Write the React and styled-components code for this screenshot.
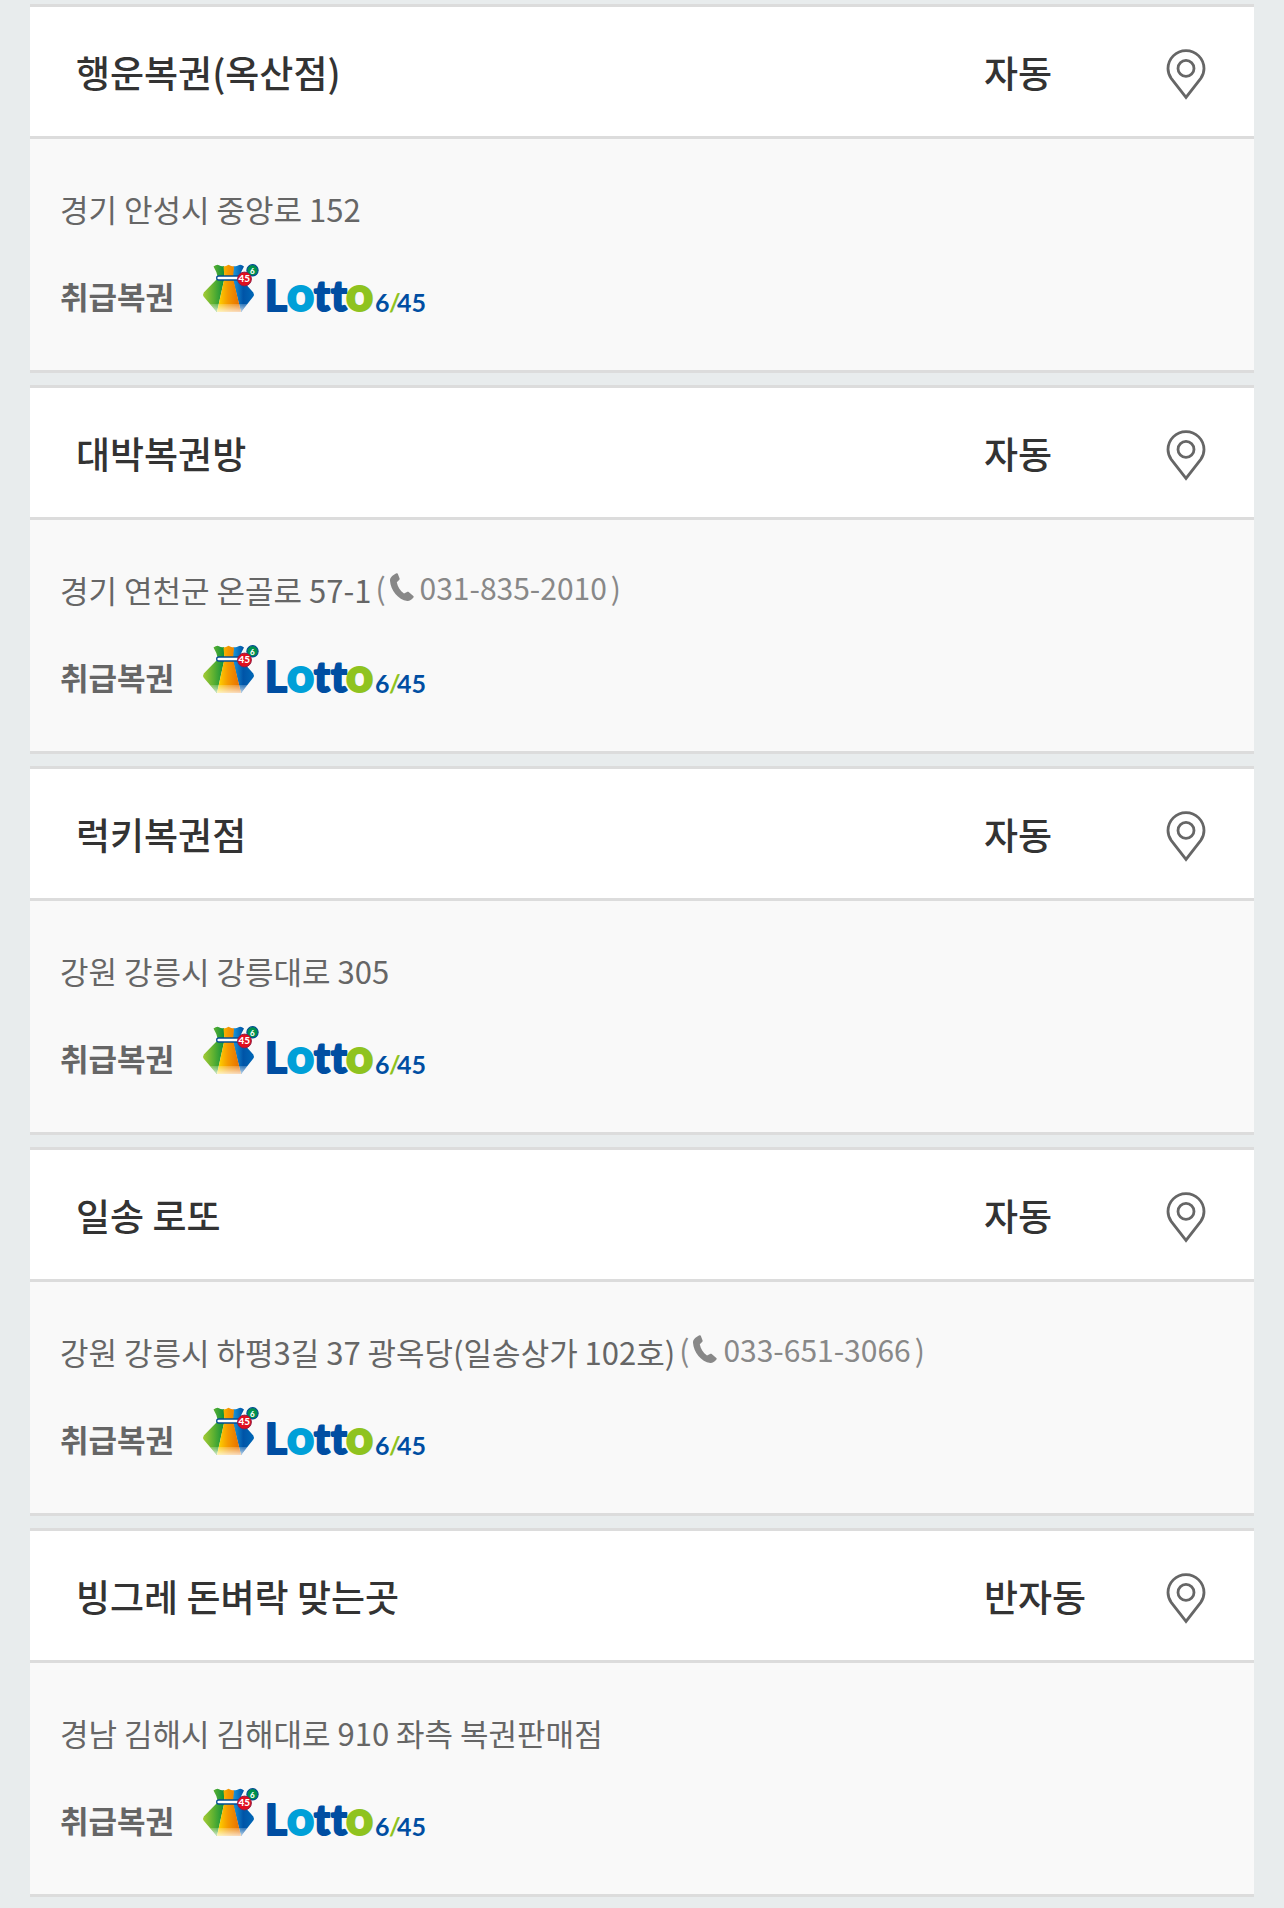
import React from "react";
import styled, { createGlobalStyle } from "styled-components";

const GlobalStyle = createGlobalStyle`
  * {
    box-sizing: border-box;
  }

  body {
    margin: 0;
    background: #e8eced;
    font-family: "Noto Sans CJK KR", "Noto Sans", sans-serif;
    color: #333;
  }
`;

const StoreList = styled.ul`
  list-style: none;
  margin: 0;
  padding: 4px 30px 11px;
  display: flex;
  flex-direction: column;
  gap: 12px;
`;

const StoreCard = styled.li`
  border-top: 3px solid #dcdcdc;
  border-bottom: 3px solid #dcdcdc;
  background: #f9f9f9;
`;

const StoreHead = styled.div`
  display: flex;
  align-items: flex-end;
  padding: 37px 48px 36px 46px;
  background: #fff;
  border-bottom: 3px solid #dcdcdc;
`;

const StoreName = styled.h3`
  flex: 1;
  margin: 0;
  font-size: 37px;
  line-height: 56px;
  font-weight: 500;
`;

const PickType = styled.span`
  width: 182px;
  font-size: 37px;
  line-height: 56px;
  font-weight: 500;
`;

const MapButton = styled.button`
  display: flex;
  padding: 0;
  border: 0;
  background: none;
  cursor: pointer;
`;

const StoreBody = styled.div`
  padding: 46px 30px 57px;
`;

const AddressRow = styled.div`
  display: flex;
  align-items: flex-start;
  gap: 4px;
  color: #666;
`;

const Address = styled.span`
  font-size: 31px;
  line-height: 48px;
`;

const Phone = styled.span`
  display: flex;
  align-items: center;
  gap: 4px;
  font-size: 30px;
  line-height: 42px;
  color: #888;

  a {
    display: flex;
    align-items: center;
    gap: 6px;
    color: inherit;
    text-decoration: none;
  }
`;

const LottoRow = styled.div`
  display: flex;
  align-items: flex-end;
  gap: 29px;
  margin-top: 30px;
`;

const LottoLabel = styled.strong`
  font-size: 31px;
  line-height: 34px;
  font-weight: 700;
  color: #666;
`;

const LogoSvg = styled.svg`
  display: block;
  overflow: visible;
`;

const stores = [
  { name: "행운복권(옥산점)", type: "자동", address: "경기 안성시 중앙로 152" },
  {
    name: "대박복권방",
    type: "자동",
    address: "경기 연천군 온골로 57-1",
    phone: "031-835-2010",
  },
  { name: "럭키복권점", type: "자동", address: "강원 강릉시 강릉대로 305" },
  {
    name: "일송 로또",
    type: "자동",
    address: "강원 강릉시 하평3길 37 광옥당(일송상가 102호)",
    phone: "033-651-3066",
  },
  {
    name: "빙그레 돈벼락 맞는곳",
    type: "반자동",
    address: "경남 김해시 김해대로 910 좌측 복권판매점",
  },
];

function PinIcon() {
  return (
    <svg width="40" height="52" viewBox="0 -1 40 52" fill="none" stroke="#666" strokeWidth="2.8">
      <path d="M20 48.4 5.2 29.4C3.2 26.6 2 23.2 2 19.6a18 18 0 0 1 36 0c0 3.6-1.2 7-3.2 9.8Z" />
      <circle cx="20" cy="19.4" r="8" />
    </svg>
  );
}

function PhoneIcon() {
  return (
    <svg width="24" height="29" viewBox="0 0 24 29" fill="#888">
      <path d="M6.6.3c.5-.3 1 0 1.2.5l1.700 4.500c.3.7.1 1.200-.4 1.700L6.800 9.200c.8 4.700 3.300 8.500 7.200 11.200l3-1.500c.6-.3 1.200-.2 1.700.2l4.600 3.900c.5.4.5 1 .1 1.500-1.800 2.200-3.800 3.600-6.100 3.500C8.200 26.900.6 17 0 7.700-.1 4 3.500 1.700 6.600.3Z" />
    </svg>
  );
}

function LottoLogo({ id }) {
  return (
    <LogoSvg width="222" height="50" viewBox="0 0 222 50" role="img" aria-label="Lotto 6/45">
      <defs>
        <linearGradient id={id + "green"} x1="0" x2="1">
          <stop offset="0" stopColor="#a5cb35" />
          <stop offset="0.5" stopColor="#5bb031" />
          <stop offset="1" stopColor="#0b8f3c" />
        </linearGradient>
        <linearGradient id={id + "orange"} x1="0" x2="1">
          <stop offset="0" stopColor="#ffdc00" />
          <stop offset="0.45" stopColor="#f59a00" />
          <stop offset="1" stopColor="#e56a00" />
        </linearGradient>
        <linearGradient id={id + "blue"} x1="0" x2="1">
          <stop offset="0" stopColor="#1b9be0" />
          <stop offset="0.5" stopColor="#0054a7" />
          <stop offset="1" stopColor="#0068b7" />
        </linearGradient>
        <linearGradient id={id + "fade"} x1="0" x2="0" y1="0" y2="1">
          <stop offset="0" stopColor="#fff" stopOpacity="0.2" />
          <stop offset="1" stopColor="#fff" stopOpacity="0.75" />
        </linearGradient>
      </defs>

      <path
        fill={`url(#${id}green)`}
        d="M10.5 3.5Q14 1 16 2.200 18.500 4 21 3L21.500 15 14 49Q6 40 .6 33.500-.4 31.500.8 29.500 9 21 15 15 14 9 10.500 3.500Z"
      />
      <path
        fill={`url(#${id}blue)`}
        d="M30.5 3Q33 4 35.500 2.200 38 1 41 3.500 37.500 9 36.500 15 43 21 50.300 29.500 51.500 31.500 50.300 33.500L38 49 29.500 15Z"
      />
      <path fill={`url(#${id}orange)`} d="M20.5 3.500Q23 3.500 25.500 1.800 28 3.500 31 3.500L30 15 38 49H14L21.500 15Z" />
      <path fill={`url(#${id}fade)`} d="M7 41H44.500L38 49H14Z" />

      <rect x="13.7" y="13" width="25" height="4" rx="2" fill="#fff" stroke="#004e92" strokeWidth="1.3" />
      <circle cx="49.5" cy="7.3" r="5.6" fill="#00914c" stroke="#004e92" strokeWidth="1.2" />
      <circle cx="41.5" cy="16" r="6.9" fill="#e00f1e" stroke="#8f1f46" strokeWidth="1" />

      <g fontFamily="Lato, sans-serif" fontWeight="900">
        <text x="49.3" y="10.5" fontSize="8" textAnchor="middle" fill="#fff">6</text>
        <text x="41.3" y="19.4" fontSize="10" textAnchor="middle" fill="#fff">45</text>
        <g fontSize="42" fill="#004ea2" stroke="#004ea2" strokeWidth="2" strokeLinejoin="round">
          <text x="62" y="48">L</text>
          <text x="84" y="48" fontSize="47" fill="#00a0d8" stroke="#00a0d8">o</text>
          <text x="111" y="48">t</text>
          <text x="128" y="48">t</text>
          <text x="143" y="48" fontSize="47" fill="#8fc31f" stroke="#8fc31f">o</text>
        </g>
        <g fontSize="25" fontWeight="700" fill="#004ea2">
          <text x="172" y="49">6</text>
          <text x="186" y="49" fill="#8fc31f">/</text>
          <text x="194" y="49">45</text>
        </g>
      </g>
    </LogoSvg>
  );
}

export default function App() {
  return (
    <>
      <GlobalStyle />
      <StoreList>
        {stores.map((store, key) => {
          return (
            <StoreCard key={key}>
              <StoreHead>
                <StoreName>{store.name}</StoreName>
                <PickType>{store.type}</PickType>
                <MapButton type="button" aria-label={store.name}>
                  <PinIcon />
                </MapButton>
              </StoreHead>

              <StoreBody>
                <AddressRow>
                  <Address>{store.address}</Address>
                  {store.phone && (
                    <Phone>
                      (
                      <a href={"tel:" + store.phone}>
                        <PhoneIcon />
                        {store.phone}
                      </a>
                      )
                    </Phone>
                  )}
                </AddressRow>

                <LottoRow>
                  <LottoLabel>취급복권</LottoLabel>
                  <LottoLogo id={"lotto" + key} />
                </LottoRow>
              </StoreBody>
            </StoreCard>
          );
        })}
      </StoreList>
    </>
  );
}
